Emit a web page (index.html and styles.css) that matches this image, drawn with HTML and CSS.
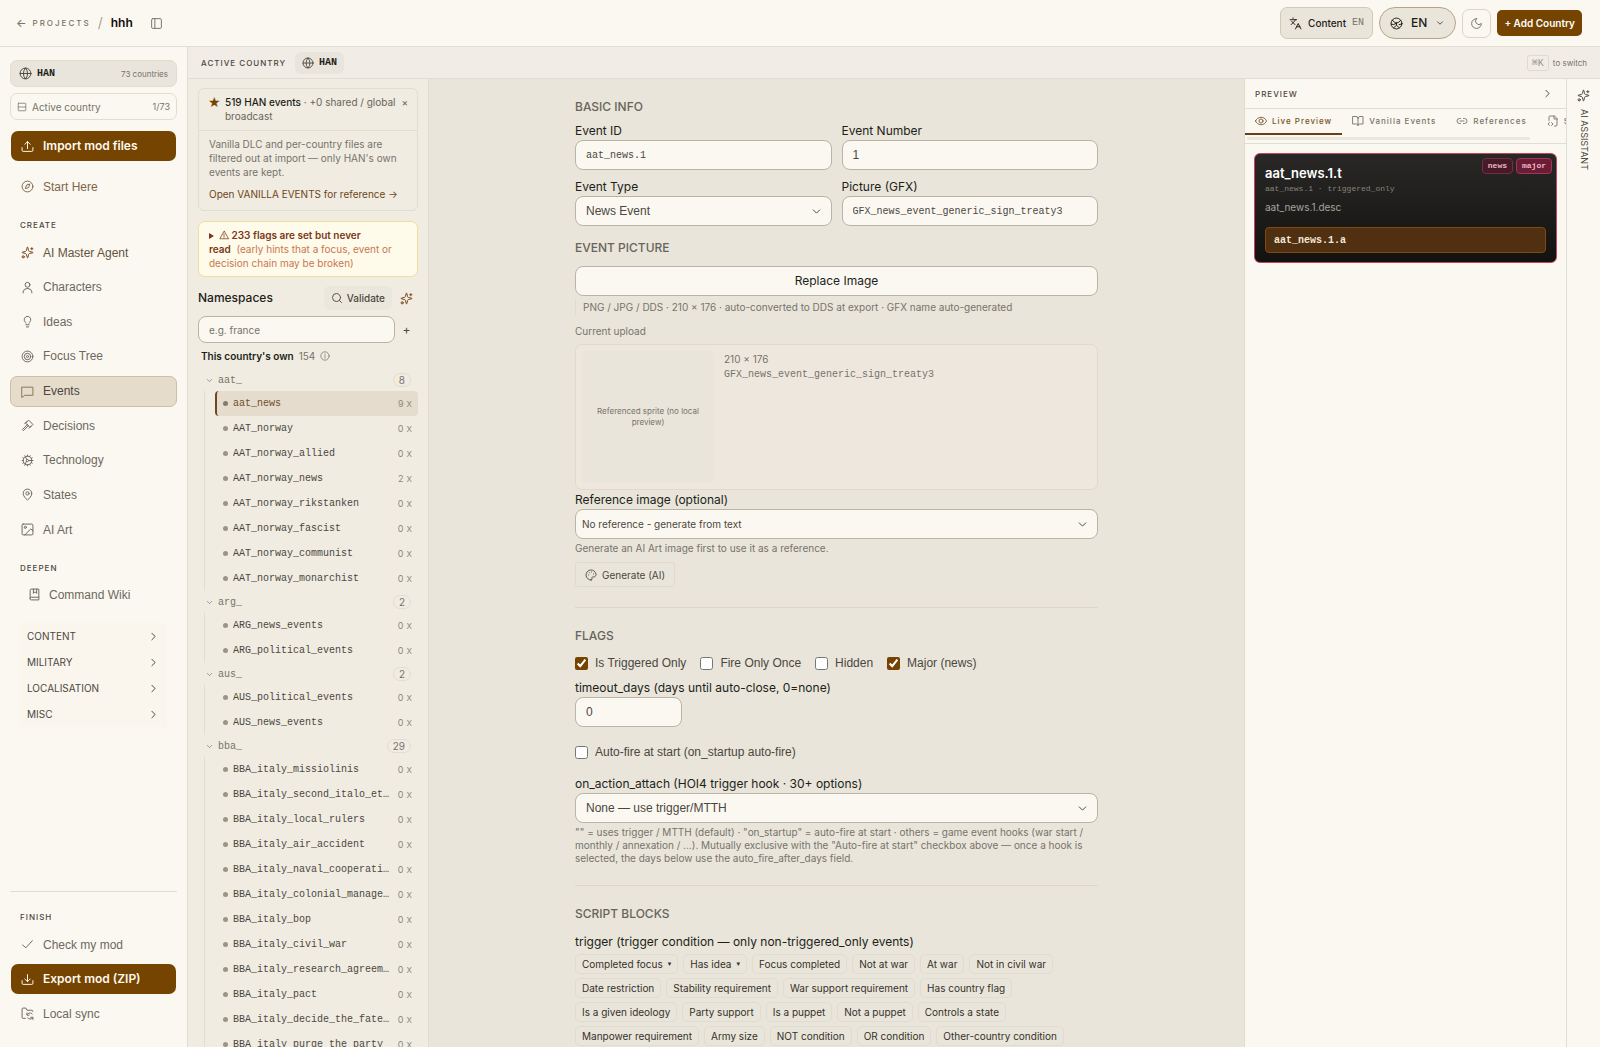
FILE: index.html
```html
<!DOCTYPE html>
<html lang="en">
<head>
  <meta charset="UTF-8">
  <meta name="viewport" content="width=device-width, initial-scale=1.0">
  <title>hhh - Events</title>
  <link rel="stylesheet" href="styles.css">
</head>
<body>
  <!-- Icon sprite -->
  <svg class="sprite" aria-hidden="true">
    <symbol id="i-panel" viewBox="0 0 24 24"><rect x="3" y="3" width="18" height="18" rx="2"/><path d="M9 3v18"/></symbol>
    <symbol id="i-languages" viewBox="0 0 24 24"><path d="m5 8 6 6M4 14l6-6 2-3M2 5h12M7 2h1M22 22l-5-10-5 10M14 18h6"/></symbol>
    <symbol id="i-earth" viewBox="0 0 24 24"><circle cx="12" cy="12" r="10"/><path d="M4 6c3 1 4 5 8 5s6-4 8-5M12 11v4l-5 5M12 15l5 5M2 13l5 1 5-3M22 13l-5 1"/></symbol>
    <symbol id="i-globe" viewBox="0 0 24 24"><circle cx="12" cy="12" r="10"/><path d="M12 2a14.5 14.5 0 0 0 0 20 14.5 14.5 0 0 0 0-20M2 12h20"/></symbol>
    <symbol id="i-down" viewBox="0 0 24 24"><path d="m6 9 6 6 6-6"/></symbol>
    <symbol id="i-right" viewBox="0 0 24 24"><path d="m9 18 6-6-6-6"/></symbol>
    <symbol id="i-moon" viewBox="0 0 24 24"><path d="M12 3a6 6 0 0 0 9 9 9 9 0 1 1-9-9Z"/></symbol>
    <symbol id="i-rows" viewBox="0 0 24 24"><rect x="3" y="3" width="18" height="18" rx="1"/><path d="M3 12h18"/></symbol>
    <symbol id="i-upload" viewBox="0 0 24 24"><path d="M12 16V3M7 8l5-5 5 5M2 14v5a2 2 0 0 0 2 2h16a2 2 0 0 0 2-2v-5"/></symbol>
    <symbol id="i-download" viewBox="0 0 24 24"><path d="M12 3v13M7 11l5 5 5-5M2 14v5a2 2 0 0 0 2 2h16a2 2 0 0 0 2-2v-5"/></symbol>
    <symbol id="i-compass" viewBox="0 0 24 24"><circle cx="12" cy="12" r="10"/><path d="m16 8-2 6-6 2 2-6z"/></symbol>
    <symbol id="i-sparkles" viewBox="0 0 24 24"><path d="M9.9 15.5A2 2 0 0 0 8.5 14l-6-1.6a.5.5 0 0 1 0-1l6-1.5A2 2 0 0 0 10 8.500l1.500-6.100a.5.5 0 0 1 1 0L14 8.500A2 2 0 0 0 15.500 10l6.100 1.500a.5.5 0 0 1 0 1L15.500 14a2 2 0 0 0-1.500 1.500l-1.500 6.100a.5.5 0 0 1-1 0zM20 3v4M22 5h-4"/><circle cx="4" cy="20" r="2"/></symbol>
    <symbol id="i-user" viewBox="0 0 24 24"><circle cx="12" cy="7" r="4.500"/><path d="M4 22v-2a7 7 0 0 1 7-6h2a7 7 0 0 1 7 6v2"/></symbol>
    <symbol id="i-bulb" viewBox="0 0 24 24"><path d="M15 15c.2-1 .7-1.700 1.500-2.500A6 6 0 1 0 6 9c0 1 .2 2.200 1.500 3.500.7.7 1.300 1.500 1.500 2.500M9 18h6M10 22h4"/></symbol>
    <symbol id="i-target" viewBox="0 0 24 24"><circle cx="12" cy="12" r="10"/><circle cx="12" cy="12" r="6"/><circle cx="12" cy="12" r="2"/></symbol>
    <symbol id="i-message" viewBox="0 0 24 24"><path d="M2 4h20v15H7l-5 4z"/></symbol>
    <symbol id="i-hammer" viewBox="0 0 24 24"><path d="m12 10-9 9a1.500 1.500 0 0 0 2 2l9-9M9 7l5-5 8 8-5 5zM7 8l4-3M15 17l4-4"/></symbol>
    <symbol id="i-cog" viewBox="0 0 24 24"><circle cx="12" cy="12" r="8"/><circle cx="12" cy="12" r="2"/><path d="M12 2v2M12 20v2M2 12h2M14 12h8M17 3.300l-1 1.800M7 20.700l3-7M20.700 7 19 8M3.300 17 5 16M3.300 7 5 8M20.700 17 19 16M7 3.300l4 7M17 20.700l-1-1.800"/></symbol>
    <symbol id="i-pin" viewBox="0 0 24 24"><path d="M20 10c0 5-5.500 10.200-7.400 11.800a1 1 0 0 1-1.200 0C9.500 20.200 4 15 4 10a8 8 0 0 1 16 0"/><circle cx="12" cy="10" r="3"/></symbol>
    <symbol id="i-image" viewBox="0 0 24 24"><rect x="2" y="2" width="20" height="20" rx="2"/><circle cx="8" cy="8" r="2"/><path d="m22 14-4-3-11 11"/></symbol>
    <symbol id="i-book" viewBox="0 0 24 24"><path d="M10 2v8l3-3 3 3V2"/><path d="M4 19V4a2 2 0 0 1 2-2h14v20H6a2 2 0 0 1 0-5h14"/></symbol>
    <symbol id="i-check" viewBox="0 0 24 24"><path d="M21 5 9 18l-6-5"/></symbol>
    <symbol id="i-sync" viewBox="0 0 24 24"><path d="M8 21H4a2 2 0 0 1-2-2V4a2 2 0 0 1 2-2h5l2 4h9a2 2 0 0 1 2 2M11 11v4h4M22 23v-4h-4M11 14c3-4 8-4 10-1M22 20c-3 3-8 3-10 0"/></symbol>
    <symbol id="i-search" viewBox="0 0 24 24"><circle cx="11" cy="11" r="8"/><path d="m21 21-4.300-4.300"/></symbol>
    <symbol id="i-warn" viewBox="0 0 24 24"><path d="M12 3 2 21h20zM12 9v6M12 17v1"/></symbol>
    <symbol id="i-info" viewBox="0 0 24 24"><circle cx="12" cy="12" r="10"/><path d="M12 17v-6M12 7v1"/></symbol>
    <symbol id="i-palette" viewBox="0 0 24 24"><path d="M12 22a10 10 0 1 1 10-11c0 3-2 5-5 5h-2a2 2 0 0 0-1 3c1 1 0 3-2 3z"/><path d="M7 12h.1M8.500 7.500h.1M13 6h.1M17 10h.1"/></symbol>
    <symbol id="i-eye" viewBox="0 0 24 24"><path d="M1 12c4-10 18-10 22 0-4 10-18 10-22 0z"/><circle cx="12" cy="12" r="4"/></symbol>
    <symbol id="i-open-book" viewBox="0 0 24 24"><path d="M12 6v15M2 3h6a4 4 0 0 1 4 4 4 4 0 0 1 4-4h6v15h-7a3 3 0 0 0-3 3 3 3 0 0 0-3-3H2z"/></symbol>
    <symbol id="i-link" viewBox="0 0 24 24"><path d="M9 17H7A5 5 0 0 1 7 7h2M15 7h2a5 5 0 0 1 0 10h-2M8 12h8"/></symbol>
    <symbol id="i-file-code" viewBox="0 0 24 24"><path d="M4 11V4a2 2 0 0 1 2-2h9l5 5v13a2 2 0 0 1-2 2h-3M14 2v6h6M5 15l-3 3 3 3M9 15l3 3-3 3"/></symbol>
  </svg>

  <div class="app">
    <header class="topbar">
      <a href="#" class="back"><span>←</span> PROJECTS</a>
      <span class="slash">/</span>
      <strong class="project">hhh</strong>
      <button type="button" class="icon-btn" aria-label="Toggle sidebar"><svg class="icon"><use href="#i-panel"/></svg></button>
      <div class="topbar-actions">
        <button type="button" class="content-btn"><svg class="icon"><use href="#i-languages"/></svg>Content <span class="mono">EN</span></button>
        <button type="button" class="lang-btn"><svg class="icon"><use href="#i-earth"/></svg>EN<svg class="icon small"><use href="#i-down"/></svg></button>
        <button type="button" class="theme-btn" aria-label="Dark mode"><svg class="icon"><use href="#i-moon"/></svg></button>
        <button type="button" class="add-btn">+ Add Country</button>
      </div>
    </header>

    <!-- Sidebar -->
    <aside class="sidebar">
      <button type="button" class="country-btn"><svg class="icon"><use href="#i-globe"/></svg><b>HAN</b><small>73 countries</small></button>
      <button type="button" class="active-btn"><svg class="icon small"><use href="#i-rows"/></svg>Active country<small>1/73</small></button>
      <button type="button" class="primary import"><svg class="icon"><use href="#i-upload"/></svg>Import mod files</button>
      <a href="#" class="nav-item warm"><svg class="icon"><use href="#i-compass"/></svg>Start Here</a>

      <h2 class="nav-title">CREATE</h2>
      <nav class="nav">
        <a href="#" class="nav-item agent"><svg class="icon"><use href="#i-sparkles"/></svg>AI Master Agent</a>
        <a href="#" class="nav-item"><svg class="icon"><use href="#i-user"/></svg>Characters</a>
        <a href="#" class="nav-item"><svg class="icon"><use href="#i-bulb"/></svg>Ideas</a>
        <a href="#" class="nav-item"><svg class="icon"><use href="#i-target"/></svg>Focus Tree</a>
        <a href="#" class="nav-item current"><svg class="icon"><use href="#i-message"/></svg>Events</a>
        <a href="#" class="nav-item"><svg class="icon"><use href="#i-hammer"/></svg>Decisions</a>
        <a href="#" class="nav-item"><svg class="icon"><use href="#i-cog"/></svg>Technology</a>
        <a href="#" class="nav-item"><svg class="icon"><use href="#i-pin"/></svg>States</a>
        <a href="#" class="nav-item"><svg class="icon"><use href="#i-image"/></svg>AI Art</a>
      </nav>

      <h2 class="nav-title deepen">DEEPEN</h2>
      <a href="#" class="nav-item wiki"><svg class="icon"><use href="#i-book"/></svg>Command Wiki</a>
      <div class="folds">
        <button type="button">CONTENT<svg class="icon"><use href="#i-right"/></svg></button>
        <button type="button">MILITARY<svg class="icon"><use href="#i-right"/></svg></button>
        <button type="button">LOCALISATION<svg class="icon"><use href="#i-right"/></svg></button>
        <button type="button">MISC<svg class="icon"><use href="#i-right"/></svg></button>
      </div>

      <div class="finish">
        <h2 class="nav-title">FINISH</h2>
        <a href="#" class="nav-item"><svg class="icon"><use href="#i-check"/></svg>Check my mod</a>
        <button type="button" class="primary"><svg class="icon"><use href="#i-download"/></svg>Export mod (ZIP)</button>
        <a href="#" class="nav-item"><svg class="icon"><use href="#i-sync"/></svg>Local sync</a>
      </div>
    </aside>

    <div class="country-bar">
      <span class="caps">ACTIVE COUNTRY</span>
      <button type="button" class="country-chip"><svg class="icon"><use href="#i-globe"/></svg><b>HAN</b></button>
      <span class="switch-hint"><kbd>⌘K</kbd> to switch</span>
    </div>

    <!-- Namespaces -->
    <section class="spaces">
      <div class="info-card">
        <div class="info-head">
          <span class="star">★</span>
          <p><b>519 HAN events</b> · +0 shared / global broadcast</p>
          <button type="button" aria-label="Dismiss">×</button>
        </div>
        <div class="info-body">
          <p>Vanilla DLC and per-country files are filtered out at import — only HAN's own events are kept.</p>
          <a href="#">Open VANILLA EVENTS for reference →</a>
        </div>
      </div>

      <div class="warn-card">
        <b><span class="marker"></span><svg class="icon"><use href="#i-warn"/></svg> 233 flags are set but never read</b>&nbsp;&nbsp;(early hints that a focus, event or decision chain may be broken)
      </div>

      <div class="spaces-head">
        <h2>Namespaces</h2>
        <button type="button" class="validate"><svg class="icon"><use href="#i-search"/></svg>Validate</button>
        <button type="button" class="magic" aria-label="Generate"><svg class="icon"><use href="#i-sparkles"/></svg></button>
      </div>
      <div class="spaces-add">
        <input type="text" placeholder="e.g. france" aria-label="New namespace">
        <button type="button" aria-label="Add namespace">+</button>
      </div>
      <p class="own"><b>This country's own</b> 154 <svg class="icon"><use href="#i-info"/></svg></p>

      <div class="group">
        <button type="button" class="group-head"><svg class="icon"><use href="#i-down"/></svg>aat_<span>8</span></button>
        <ul>
          <li class="selected"><a href="#">aat_news</a><span>9</span><button type="button">X</button></li>
          <li><a href="#">AAT_norway</a><span>0</span><button type="button">X</button></li>
          <li><a href="#">AAT_norway_allied</a><span>0</span><button type="button">X</button></li>
          <li><a href="#">AAT_norway_news</a><span>2</span><button type="button">X</button></li>
          <li><a href="#">AAT_norway_rikstanken</a><span>0</span><button type="button">X</button></li>
          <li><a href="#">AAT_norway_fascist</a><span>0</span><button type="button">X</button></li>
          <li><a href="#">AAT_norway_communist</a><span>0</span><button type="button">X</button></li>
          <li><a href="#">AAT_norway_monarchist</a><span>0</span><button type="button">X</button></li>
        </ul>
      </div>
      <div class="group">
        <button type="button" class="group-head"><svg class="icon"><use href="#i-down"/></svg>arg_<span>2</span></button>
        <ul>
          <li><a href="#">ARG_news_events</a><span>0</span><button type="button">X</button></li>
          <li><a href="#">ARG_political_events</a><span>0</span><button type="button">X</button></li>
        </ul>
      </div>
      <div class="group">
        <button type="button" class="group-head"><svg class="icon"><use href="#i-down"/></svg>aus_<span>2</span></button>
        <ul>
          <li><a href="#">AUS_political_events</a><span>0</span><button type="button">X</button></li>
          <li><a href="#">AUS_news_events</a><span>0</span><button type="button">X</button></li>
        </ul>
      </div>
      <div class="group">
        <button type="button" class="group-head"><svg class="icon"><use href="#i-down"/></svg>bba_<span>29</span></button>
        <ul>
          <li><a href="#">BBA_italy_missiolinis</a><span>0</span><button type="button">X</button></li>
          <li><a href="#">BBA_italy_second_italo_ethiopian_war</a><span>0</span><button type="button">X</button></li>
          <li><a href="#">BBA_italy_local_rulers</a><span>0</span><button type="button">X</button></li>
          <li><a href="#">BBA_italy_air_accident</a><span>0</span><button type="button">X</button></li>
          <li><a href="#">BBA_italy_naval_cooperation</a><span>0</span><button type="button">X</button></li>
          <li><a href="#">BBA_italy_colonial_management</a><span>0</span><button type="button">X</button></li>
          <li><a href="#">BBA_italy_bop</a><span>0</span><button type="button">X</button></li>
          <li><a href="#">BBA_italy_civil_war</a><span>0</span><button type="button">X</button></li>
          <li><a href="#">BBA_italy_research_agreement</a><span>0</span><button type="button">X</button></li>
          <li><a href="#">BBA_italy_pact</a><span>0</span><button type="button">X</button></li>
          <li><a href="#">BBA_italy_decide_the_fate_of</a><span>0</span><button type="button">X</button></li>
          <li><a href="#">BBA_italy_purge_the_party</a><span>0</span><button type="button">X</button></li>
        </ul>
      </div>
    </section>

    <!-- Event editor -->
    <main class="editor">
      <form class="form">
        <h2>BASIC INFO</h2>
        <div class="grid">
          <div class="field"><label for="event-id">Event ID</label><input type="text" id="event-id" class="mono" value="aat_news.1"></div>
          <div class="field"><label for="event-number">Event Number</label><input type="text" id="event-number" value="1"></div>
          <div class="field">
            <label for="event-type">Event Type</label>
            <div class="select"><select id="event-type"><option>News Event</option></select><svg class="icon"><use href="#i-down"/></svg></div>
          </div>
          <div class="field"><label for="picture">Picture (GFX)</label><input type="text" id="picture" class="mono" value="GFX_news_event_generic_sign_treaty3"></div>
        </div>

        <h2 class="picture-title">EVENT PICTURE</h2>
        <button type="button" class="replace">Replace Image</button>
        <p class="file-hint">PNG / JPG / DDS · 210 × 176 · auto-converted to DDS at export · GFX name auto-generated</p>
        <p class="upload-title">Current upload</p>
        <div class="upload">
          <div class="thumb">Referenced sprite (no local preview)</div>
          <div class="upload-info"><p>210 × 176</p><p class="mono">GFX_news_event_generic_sign_treaty3</p></div>
        </div>
        <div class="field">
          <label for="reference">Reference image (optional)</label>
          <div class="select compact"><select id="reference"><option>No reference - generate from text</option></select><svg class="icon"><use href="#i-down"/></svg></div>
        </div>
        <p class="hint">Generate an AI Art image first to use it as a reference.</p>
        <button type="button" class="generate"><svg class="icon"><use href="#i-palette"/></svg>Generate (AI)</button>

        <hr>
        <h2>FLAGS</h2>
        <div class="checks">
          <label><input type="checkbox" checked>Is Triggered Only</label>
          <label><input type="checkbox">Fire Only Once</label>
          <label><input type="checkbox">Hidden</label>
          <label><input type="checkbox" checked>Major (news)</label>
        </div>
        <div class="field timeout"><label for="timeout">timeout_days (days until auto-close, 0=none)</label><input type="text" id="timeout" value="0"></div>
        <div class="checks autofire"><label><input type="checkbox">Auto-fire at start (on_startup auto-fire)</label></div>
        <div class="field">
          <label for="on-action">on_action_attach (HOI4 trigger hook · 30+ options)</label>
          <div class="select"><select id="on-action"><option>None — use trigger/MTTH</option></select><svg class="icon"><use href="#i-down"/></svg></div>
        </div>
        <p class="hint">"" = uses trigger / MTTH (default) · "on_startup" = auto-fire at start · others = game event hooks (war start / monthly / annexation / ...). Mutually exclusive with the "Auto-fire at start" checkbox above — once a hook is selected, the days below use the auto_fire_after_days field.</p>

        <hr>
        <h2>SCRIPT BLOCKS</h2>
        <p class="block-title">trigger (trigger condition — only non-triggered_only events)</p>
        <div class="chips">
          <button type="button">Completed focus <i>▾</i></button>
          <button type="button">Has idea <i>▾</i></button>
          <button type="button">Focus completed</button>
          <button type="button">Not at war</button>
          <button type="button">At war</button>
          <button type="button">Not in civil war</button>
          <button type="button">Date restriction</button>
          <button type="button">Stability requirement</button>
          <button type="button">War support requirement</button>
          <button type="button">Has country flag</button>
          <button type="button">Is a given ideology</button>
          <button type="button">Party support</button>
          <button type="button">Is a puppet</button>
          <button type="button">Not a puppet</button>
          <button type="button">Controls a state</button>
          <button type="button">Manpower requirement</button>
          <button type="button">Army size</button>
          <button type="button">NOT condition</button>
          <button type="button">OR condition</button>
          <button type="button">Other-country condition</button>
        </div>
      </form>
    </main>

    <!-- Preview -->
    <section class="preview">
      <div class="preview-head"><span class="caps">PREVIEW</span><button type="button" aria-label="Collapse preview"><svg class="icon"><use href="#i-right"/></svg></button></div>
      <div class="tabs">
        <button type="button" class="on"><svg class="icon"><use href="#i-eye"/></svg>Live Preview</button>
        <button type="button"><svg class="icon"><use href="#i-open-book"/></svg>Vanilla Events</button>
        <button type="button"><svg class="icon"><use href="#i-link"/></svg>References</button>
        <button type="button"><svg class="icon"><use href="#i-file-code"/></svg>Script</button>
      </div>
      <div class="scrollbar"></div>
      <article class="card">
        <div class="badges"><span>news</span><span class="major">major</span></div>
        <h3>aat_news.1.t</h3>
        <p class="meta">aat_news.1 · triggered_only</p>
        <p class="desc">aat_news.1.desc</p>
        <button type="button">aat_news.1.a</button>
      </article>
    </section>

    <aside class="assistant">
      <button type="button"><svg class="icon"><use href="#i-sparkles"/></svg><span>AI ASSISTANT</span></button>
    </aside>
  </div>
</body>
</html>
```
FILE: styles.css
```css
:root {
  --paper: #fbf8f1;
  --panel: #f0ece2;
  --canvas: #e9e5da;
  --line: #e2ddd1;
  --field-line: #b9b4a5;
  --brown: #744400;
  --ink: #211e18;
  --text: #4b473e;
  --muted: #77736a;
  --mono: "Liberation Mono", monospace;
  --plain: "Liberation Sans", Arial, sans-serif;
}

* {
  box-sizing: border-box;
}

body {
  margin: 0;
  font-family: Inter, "Liberation Sans", sans-serif;
  font-size: 12px;
  line-height: 16px;
  color: var(--text);
  background: var(--paper);
}

h2, h3, p, ul {
  margin: 0;
  padding: 0;
}

button, input, select {
  font: inherit;
  color: inherit;
  margin: 0;
}

button {
  display: flex;
  align-items: center;
  padding: 0;
  border: 0;
  background: none;
  cursor: pointer;
}

a {
  color: inherit;
  text-decoration: none;
}

b {
  font-weight: 600;
}

.sprite {
  display: none;
}

.icon {
  width: 13px;
  height: 13px;
  flex: none;
  fill: none;
  stroke: currentColor;
  stroke-width: 1.8;
  stroke-linecap: round;
  stroke-linejoin: round;
}

.icon.small {
  width: 10px;
  height: 10px;
}

.mono {
  font-family: var(--mono);
  font-size: 10px;
}

.caps {
  font-size: 8px;
  font-weight: 500;
  letter-spacing: 1px;
}

.app {
  display: grid;
  grid-template-columns: 188px 241px minmax(0, 1fr) 322px 34px;
  grid-template-rows: 47px 32px minmax(0, 1fr);
  height: 100vh;
  overflow: hidden;
}

/* Top bar */
.topbar {
  grid-column: 1 / -1;
  display: flex;
  align-items: center;
  padding: 0 18px 0 16px;
  border-bottom: 1px solid var(--line);
}

.back {
  display: flex;
  gap: 6px;
  font-size: 8px;
  font-weight: 500;
  letter-spacing: 2px;
  color: var(--muted);
}

.back span {
  letter-spacing: 0;
  font-size: 11px;
}

.slash {
  margin: 0 8px 0 7px;
  font-size: 14px;
  color: #a8a398;
}

.project {
  color: #0f0d0a;
  font-weight: 600;
}

.icon-btn {
  margin-left: 17px;
  color: var(--muted);
}

.topbar-actions {
  display: flex;
  align-items: center;
  gap: 6px;
  margin-left: auto;
  color: var(--ink);
}

.content-btn {
  height: 32px;
  gap: 6px;
  padding: 0 8px;
  border: 1px solid #d3c9b6;
  border-radius: 7px;
  background: var(--canvas);
  font-size: 10px;
  font-weight: 500;
}

.content-btn .mono {
  color: var(--muted);
  line-height: 10px;
}

.lang-btn {
  height: 32px;
  gap: 8px;
  padding: 0 10px;
  border: 1px solid #b5a48a;
  border-radius: 16px;
  background: var(--canvas);
  font-weight: 500;
}

.theme-btn {
  width: 29px;
  height: 29px;
  justify-content: center;
  border: 1px solid #ddd5c2;
  border-radius: 7px;
  color: var(--muted);
}

.add-btn {
  height: 26px;
  padding: 0 7px;
  border-radius: 5px;
  background: var(--brown);
  color: #fff;
  font-size: 10px;
  font-weight: 600;
}

/* Sidebar */
.sidebar {
  grid-row: 2 / 4;
  display: flex;
  flex-direction: column;
  padding: 13px 10px 18px;
  border-right: 1px solid var(--line);
}

.country-btn, .active-btn {
  height: 27px;
  flex: none;
  gap: 5px;
  padding: 0 8px;
  border: 1px solid #e3ddd0;
  border-radius: 7px;
}

.country-btn {
  background: #e9e5dc;
  margin-bottom: 6px;
}

.country-btn b, .country-chip b {
  font: bold 10px var(--mono);
  color: var(--ink);
}

.sidebar small {
  margin-left: auto;
  font-size: 8px;
  color: var(--muted);
}

.active-btn {
  padding: 0 6px;
  font-size: 10px;
  color: var(--muted);
}

.sidebar .active-btn small {
  font-size: 9px;
}

.primary {
  height: 30px;
  flex: none;
  gap: 9px;
  padding: 0 10px;
  margin: 0 1px;
  border-radius: 7px;
  background: var(--brown);
  color: #fffaf0;
  font-weight: 600;
}

.primary.import {
  margin-top: 11px;
  margin-bottom: 10px;
}

.nav {
  display: flex;
  flex-direction: column;
  justify-content: space-between;
  height: 308px;
}

.nav-item {
  display: flex;
  align-items: center;
  flex: none;
  gap: 9px;
  height: 31px;
  padding: 0 10px;
  border: 1px solid transparent;
  border-radius: 7px;
  font-family: var(--plain);
  color: #6d685e;
}

.nav-item.warm {
  color: #80654a;
}

.nav-item.agent {
  color: #65543c;
}

.nav-item.agent .icon {
  color: #76451c;
}

.nav-item.current {
  border-color: #cdbfa2;
  background: #e6dccc;
  color: var(--text);
}

.nav-item.current .icon {
  color: #8f7452;
}

.nav-title {
  padding: 0 10px;
  margin: 15px 0 4px;
  font-size: 8px;
  font-weight: 500;
  letter-spacing: 1px;
}

.nav-title.deepen {
  margin: 15px 0 3px;
}

.wiki {
  margin-left: 7px;
  gap: 8px;
}

.folds {
  margin: 13px 10px 0;
}

.folds button {
  width: 100%;
  height: 26px;
  justify-content: space-between;
  padding: 0 7px;
  background: #faf6ee;
  font-size: 10px;
}

.finish {
  display: flex;
  flex-direction: column;
  margin: auto 0 0;
  border-top: 1px solid var(--line);
}

.finish .nav-title {
  margin: 17px 0 4px;
}

.finish .nav-item:last-child {
  margin-top: 4px;
}

.finish .primary {
  margin-top: 4px;
}

/* Active country bar */
.country-bar {
  grid-column: 2 / -1;
  display: flex;
  align-items: center;
  gap: 9px;
  padding: 0 13px;
  border-bottom: 1px solid var(--line);
  background: #f1ede6;
}

.country-chip {
  height: 22px;
  gap: 5px;
  padding: 0 7px;
  border-radius: 6px;
  background: #e9e5dc;
}

.country-chip .icon {
  width: 12px;
  height: 12px;
}

.switch-hint {
  display: flex;
  align-items: center;
  gap: 4px;
  margin-left: auto;
  font-size: 8px;
  color: var(--muted);
}

kbd {
  padding: 1px 4px;
  border: 1px solid #e0dac9;
  border-radius: 3px;
  font: 10px var(--mono);
  color: #9a958a;
}

/* Namespaces */
.spaces {
  padding: 9px 10px 0;
  border-right: 1px solid var(--line);
  background: var(--panel);
  overflow: hidden;
}

.info-card {
  border: 1px solid var(--line);
  border-radius: 6px;
  font-size: 10px;
  line-height: 14px;
}

.info-head {
  display: flex;
  align-items: flex-start;
  padding: 6px 9px 7px;
  border-bottom: 1px solid var(--line);
  color: #68645a;
}

.info-head b {
  font-weight: 500;
  color: var(--ink);
}

.info-head p {
  flex: 1;
}

.info-head button {
  line-height: 14px;
}

.star {
  width: 17px;
  font: 14px/14px "DejaVu Sans", sans-serif;
  color: var(--brown);
}

.info-body {
  padding: 6px 10px 9px;
  color: var(--muted);
}

.info-body a {
  display: block;
  margin-top: 8px;
  color: #6d4617;
}

.warn-card {
  margin-top: 10px;
  padding: 6px 10px;
  border: 1px solid #f3dc9b;
  border-radius: 7px;
  background: #fffbeb;
  color: #c9764f;
  font-size: 10px;
  line-height: 14px;
}

.warn-card b {
  color: #7b3717;
}

.warn-card .icon {
  width: 10px;
  height: 10px;
  vertical-align: -1px;
}

.marker {
  display: inline-block;
  margin-right: 5px;
  border: solid transparent;
  border-width: 3px 0 3px 5px;
  border-left-color: #7b3717;
}

.spaces-head {
  display: flex;
  align-items: center;
  margin-top: 9px;
}

.spaces-head h2 {
  flex: 1;
  font-size: 12px;
  font-weight: 500;
  color: var(--ink);
}

.validate {
  height: 24px;
  gap: 4px;
  padding: 0 7px;
  border-radius: 6px;
  background: #ebe7dd;
  font-size: 10px;
  font-weight: 500;
}

.validate .icon {
  width: 12px;
  height: 12px;
}

.magic {
  padding: 0 5px 0 8px;
  color: #76451c;
}

.spaces-add {
  display: grid;
  grid-template-columns: 1fr 23px;
  margin: 6px 0 5px;
}

.spaces-add input {
  min-width: 0;
  height: 27px;
  padding: 0 10px;
  border: 1px solid var(--field-line);
  border-radius: 8px;
  background: var(--paper);
  font-size: 10px;
}

.spaces-add input::placeholder {
  color: var(--muted);
}

.spaces-add button {
  justify-content: center;
}

.own {
  display: flex;
  align-items: center;
  gap: 5px;
  padding: 0 3px;
  margin-bottom: 5px;
  font-size: 10px;
  color: var(--muted);
}

.own b {
  color: var(--ink);
}

.own .icon {
  width: 10px;
  height: 10px;
}

.group-head {
  width: 100%;
  height: 22px;
  gap: 4px;
  padding: 0 7px;
  font: 10px var(--mono);
  color: var(--muted);
}

.group-head .icon {
  width: 9px;
  height: 9px;
}

.group-head span {
  min-width: 16px;
  margin-left: auto;
  padding: 0 5px;
  border: 1px solid #e1ddd2;
  border-radius: 7px;
  font: 10px/12px Inter, sans-serif;
  text-align: center;
}

.group ul {
  margin-left: 6px;
  padding-left: 10px;
  border-left: 1px solid var(--line);
  list-style: none;
}

.group li {
  display: flex;
  align-items: center;
  height: 25px;
  padding: 0 6px;
  border-left: 2px solid transparent;
  border-radius: 4px;
  font: 10px var(--mono);
}

.group li::before {
  content: "";
  width: 5px;
  height: 5px;
  flex: none;
  margin-right: 5px;
  border-radius: 50%;
  background: #99958a;
}

.group li a {
  flex: 1;
  min-width: 0;
  margin-right: 8px;
  overflow: hidden;
  text-overflow: ellipsis;
  white-space: nowrap;
}

.group li span, .group li button {
  font: 9px Inter, sans-serif;
  color: #8d887c;
}

.group li button {
  margin-left: 3px;
  font-size: 8px;
}

.group li.selected {
  border-left-color: #6b491c;
  background: #e5dccd;
}

.group li.selected a {
  color: #6d5029;
}

.group li.selected::before {
  background: #85796a;
}

/* Editor */
.editor {
  padding: 20px 24px 0;
  background: var(--canvas);
  overflow: hidden;
}

.form {
  max-width: 523px;
  margin: 0 auto;
}

.form h2 {
  font-size: 12px;
  font-weight: 500;
  color: #68645a;
}

.grid {
  display: grid;
  grid-template-columns: 1fr 1fr;
  gap: 9px 10px;
  margin-top: 8px;
}

.field label {
  display: block;
  color: var(--ink);
}

.field input, .select select, .replace {
  width: 100%;
  height: 30px;
  padding: 0 10px;
  border: 1px solid var(--field-line);
  border-radius: 8px;
  background: var(--paper);
}

.field input, .select select {
  display: block;
  margin-top: 1px;
}

.field input:not(.mono), .select select {
  font-family: var(--plain);
}

.select {
  position: relative;
}

.select select {
  appearance: none;
}

.select .icon {
  position: absolute;
  top: 9px;
  right: 9px;
  pointer-events: none;
}

.select.compact select {
  padding: 0 6px;
  font-family: inherit;
  font-size: 10px;
}

.form .picture-title {
  margin: 14px 0 10px;
}

.replace {
  justify-content: center;
  color: var(--ink);
}

.file-hint, .upload-title, .hint {
  font-size: 10px;
  color: var(--muted);
}

.file-hint {
  margin: 3px 0 8px;
  padding-left: 7px;
  border-left: 1px solid #e0dccf;
}

.upload {
  display: flex;
  gap: 10px;
  margin: 5px 0 2px;
  padding: 6px;
  border: 1px solid #dfdacd;
  border-radius: 7px;
  background: #eee7dd;
}

.thumb {
  display: flex;
  align-items: center;
  width: 132px;
  height: 132px;
  padding: 0 14px;
  border-radius: 5px;
  background: var(--canvas);
  color: var(--muted);
  font-size: 8px;
  line-height: 11px;
  text-align: center;
}

.upload-info {
  color: var(--muted);
  font-size: 10px;
}

.hint {
  margin-top: 3px;
  line-height: 13px;
}

.generate {
  height: 25px;
  gap: 5px;
  margin-top: 7px;
  padding: 0 9px;
  border: 1px solid #dfdacd;
  border-radius: 3px;
  font-size: 10px;
}

.generate .icon {
  width: 12px;
  height: 12px;
}

hr {
  margin: 20px 0;
  border: 0;
  border-top: 1px solid #dcd7ca;
}

.checks {
  display: flex;
  flex-wrap: wrap;
  gap: 14px;
  margin: 11px 0 9px;
}

.checks label {
  display: flex;
  align-items: center;
  gap: 7px;
  font-family: var(--plain);
}

.checks input {
  width: 13px;
  height: 13px;
  accent-color: var(--brown);
}

.checks.autofire {
  margin: 17px 0 16px;
}

.timeout input {
  width: 107px;
}

.block-title {
  margin: 12px 0 4px;
  color: var(--ink);
}

.chips {
  display: flex;
  flex-wrap: wrap;
  gap: 4px 5px;
}

.chips button {
  height: 20px;
  gap: 5px;
  padding: 0 6px;
  border: 1px solid #e1dcd0;
  border-radius: 5px;
  color: #35312a;
  font-size: 10px;
}

.chips i {
  font: 7px "DejaVu Sans", sans-serif;
}

/* Preview */
.preview {
  display: flex;
  flex-direction: column;
  min-width: 0;
  border-left: 1px solid var(--line);
}

.preview-head {
  display: flex;
  align-items: center;
  justify-content: space-between;
  height: 30px;
  padding: 0 12px 0 10px;
  border-bottom: 1px solid var(--line);
}

.tabs {
  display: flex;
  height: 26px;
  overflow: hidden;
}

.tabs button {
  flex: none;
  gap: 5px;
  padding: 0 10px;
  border-bottom: 2px solid transparent;
  font-size: 8px;
  font-weight: 500;
  letter-spacing: 1px;
  color: var(--muted);
}

.tabs .on {
  border-color: #6b3f10;
  color: #76542a;
}

.tabs .icon {
  width: 12px;
  height: 12px;
}

.scrollbar {
  height: 9px;
  padding: 2px 36px 3px 2px;
  border-bottom: 1px solid var(--line);
  background: #ebe8e0 content-box;
}

.card {
  position: relative;
  margin: 9px;
  padding: 11px 10px 9px;
  border: 1px solid #c5455f;
  border-radius: 6px;
  background: linear-gradient(#2a2826, #141210);
  color: #a8a39b;
}

.badges {
  position: absolute;
  top: 4px;
  right: 4px;
  display: flex;
  gap: 3px;
}

.badges span {
  padding: 0 5px;
  border: 1px solid #792c43;
  border-radius: 4px;
  background: #451b29;
  color: #efb6c2;
  font: bold 8px/14px var(--mono);
}

.badges .major {
  border-color: #a33653;
  background: #6b1c37;
}

.card h3 {
  font-size: 13px;
  line-height: 16px;
  font-weight: 600;
  color: #fff;
}

.card .meta {
  font: 8px/14px var(--mono);
  margin-top: 1px;
  color: #87827a;
}

.card .desc {
  margin-top: 3px;
  font-size: 10px;
}

.card button {
  width: 100%;
  height: 26px;
  margin-top: 12px;
  padding: 0 8px;
  border: 1px solid #7e4a10;
  border-radius: 4px;
  background: #513012;
  color: #f3e9da;
  font: bold 10px var(--mono);
}

/* AI assistant rail */
.assistant {
  display: flex;
  justify-content: center;
  align-items: flex-start;
  padding-top: 10px;
  border-left: 1px solid var(--line);
}

.assistant button {
  flex-direction: column;
  gap: 7px;
}

.assistant span {
  writing-mode: vertical-rl;
  font-size: 9px;
  line-height: 10px;
}
```
